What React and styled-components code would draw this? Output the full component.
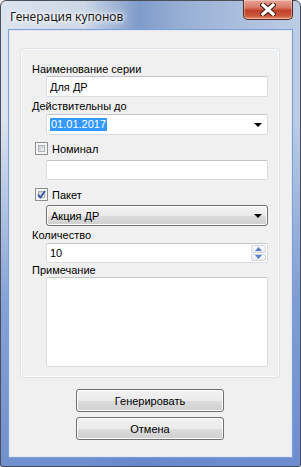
import React from "react";
import styled, { createGlobalStyle } from "styled-components";

const Global = createGlobalStyle`
  html, body { margin: 0; padding: 0; background: #fff; }
  body { width: 301px; height: 467px; overflow: hidden; }
  * { box-sizing: border-box; }
`;

const Window = styled.div`
  width: 301px;
  height: 467px;
  border: 1px solid #4a4f57;
  border-radius: 6px 6px 2px 2px;
  display: flex;
  flex-direction: column;
  padding: 0 8px 9px 8px;
  background:
    linear-gradient(to bottom, rgba(255,255,255,0) 0px, rgba(255,255,255,0) 120px, rgba(106,140,206,0.75) 300px, rgba(100,134,204,0.9) 467px),
    linear-gradient(90deg, #dbe3ee 0%, #ccd7e7 28%, #7f9bca 46%, #98afd5 60%, #bccde5 100%);
  font-family: "Liberation Sans", Arial, sans-serif;
`;

const TitleBar = styled.div`
  height: 29px;
  display: flex;
  align-items: flex-start;
  justify-content: space-between;
  flex-shrink: 0;
`;

const Title = styled.div`
  margin-top: 8px;
  margin-left: 1px;
  font-family: "Noto Sans", "Liberation Sans", sans-serif;
  font-size: 12px;
  line-height: 16px;
  color: #1b1b1b;
  text-shadow: 0 0 6px #fff, 0 0 10px #fff, 0 0 3px #fff;
`;

const CloseButton = styled.div`
  width: 50px;
  height: 20px;
  margin-top: -1px;
  margin-right: -1px;
  border: 1px solid #5a2a22;
  border-top: none;
  border-radius: 0 0 5px 5px;
  background: linear-gradient(to bottom, #e8a595 0%, #d57868 40%, #c2402a 55%, #cc5a3c 85%, #e59a7a 100%);
  box-shadow: inset 0 0 0 1px rgba(255,255,255,0.35);
  display: flex;
  align-items: center;
  justify-content: center;
`;

const Client = styled.div`
  flex: 1;
  background: #f0f0f0;
  border: 1px solid #dfe7f1;
  box-shadow: 0 0 0 1px #7f9fd6;
  display: flex;
  flex-direction: column;
  align-items: center;
  padding: 17px 11px 0 10px;
`;

const Group = styled.div`
  align-self: stretch;
  height: 330px;
  border: 1px solid #dde3ea;
  border-radius: 3px;
  box-shadow: inset 0 0 0 1px #fafafa;
  display: flex;
  flex-direction: column;
  padding: 14px 11px 0 11px;
`;

const Label = styled.div`
  font-size: 11px;
  line-height: 13px;
  height: 13px;
  color: #000;
  margin-top: ${p => p.$mt || 0}px;
  white-space: nowrap;
`;

const Box = styled.div`
  margin-left: 14px;
  margin-top: ${p => p.$mt || 0}px;
  height: ${p => p.$h}px;
  background: #fff;
  border: 1px solid #dadcdf;
  border-top-color: #c2c5ca;
  border-radius: 2px;
  display: flex;
  align-items: center;
  position: relative;
  font-size: 11px;
  color: #000;
  padding-left: 3px;
  flex-shrink: 0;
`;

const Selected = styled.span`
  background: #3399ff;
  color: #fff;
  line-height: 13px;
  padding: 0 1px;
`;

const DropArrow = styled.div`
  position: absolute;
  right: 5px;
  top: 50%;
  margin-top: -2px;
  width: 0;
  height: 0;
  border-left: 4px solid transparent;
  border-right: 4px solid transparent;
  border-top: 4px solid #000;
`;

const Combo = styled.div`
  margin-left: 14px;
  margin-top: ${p => p.$mt || 0}px;
  height: 21px;
  border: 1px solid #707070;
  border-radius: 3px;
  background: linear-gradient(to bottom, #f3f3f3 0%, #ebebeb 50%, #dddddd 51%, #cfcfcf 100%);
  box-shadow: inset 0 0 0 1px #fbfbfb;
  display: flex;
  align-items: center;
  padding-left: 4px;
  font-size: 11px;
  position: relative;
  flex-shrink: 0;
`;

const CheckRow = styled.div`
  display: flex;
  align-items: center;
  gap: 4px;
  margin-left: 3px;
  margin-top: ${p => p.$mt || 0}px;
  height: 13px;
  font-size: 11px;
  flex-shrink: 0;
`;

const CheckBox = styled.div`
  width: 13px;
  height: 13px;
  border: 1px solid #8e8f8f;
  background: #f4f4f4;
  position: relative;
  display: flex;
  align-items: center;
  justify-content: center;
  &::before {
    content: "";
    position: absolute;
    left: 2px; top: 2px; right: 2px; bottom: 2px;
    background: linear-gradient(135deg, #c6cad1 0%, #e2e3e6 60%, #f3f3f3 100%);
    border: 1px solid #aeb2b8;
  }
  svg { position: relative; }
`;

const Spin = styled.div`
  position: absolute;
  right: 1px;
  top: 1px;
  bottom: 1px;
  width: 15px;
  display: flex;
  flex-direction: column;
  gap: 1px;
`;

const SpinBtn = styled.div`
  flex: 1;
  border: 1px solid #d3d6db;
  border-radius: 2px;
  background: linear-gradient(to bottom, #f9f9f9, #eaecef);
  display: flex;
  align-items: center;
  justify-content: center;
`;

const Button = styled.div`
  width: 148px;
  height: 23px;
  margin-top: ${p => p.$mt || 0}px;
  border: 1px solid #707070;
  border-radius: 3px;
  background: linear-gradient(to bottom, #f2f2f2 0%, #ebebeb 50%, #dddddd 51%, #cfcfcf 100%);
  box-shadow: inset 0 0 0 1px #fcfcfc;
  display: flex;
  align-items: center;
  justify-content: center;
  font-size: 11px;
  color: #000;
  flex-shrink: 0;
`;

const Tri = ({ up }) => (
  <svg width="7" height="4" viewBox="0 0 7 4">
    <path d={up ? "M0 4 L3.5 0 L7 4 Z" : "M0 0 L3.5 4 L7 0 Z"} fill="#5b7fc4" />
  </svg>
);

export default function App() {
  return (
    <>
      <Global />
      <Window>
        <TitleBar>
          <Title>Генерация купонов</Title>
          <CloseButton>
            <svg width="16" height="13" viewBox="0 0 16 13">
              <path d="M3 2 L13 11 M13 2 L3 11" stroke="#4a2018" strokeWidth="5.5" strokeLinecap="square" />
              <path d="M3 2 L13 11 M13 2 L3 11" stroke="#fff" strokeWidth="3.2" strokeLinecap="square" />
            </svg>
          </CloseButton>
        </TitleBar>
        <Client>
          <Group>
            <Label>Наименование серии</Label>
            <Box $h={21}>Для ДР</Box>
            <Label $mt={3}>Действительны до</Label>
            <Box $h={21} $mt={1}>
              <Selected>01.01.2017</Selected>
              <DropArrow />
            </Box>
            <CheckRow $mt={7}>
              <CheckBox />
              Номинал
            </CheckRow>
            <Box $h={20} $mt={5} />
            <CheckRow $mt={8}>
              <CheckBox>
                <svg width="9" height="9" viewBox="0 0 9 9">
                  <path d="M1 4.5 L3.5 7.5 L8 1" stroke="#3d54a0" strokeWidth="1.8" fill="none" />
                </svg>
              </CheckBox>
              Пакет
            </CheckRow>
            <Combo $mt={4}>
              Акция ДР
              <DropArrow />
            </Combo>
            <Label $mt={3}>Количество</Label>
            <Box $h={20} $mt={1}>
              10
              <Spin>
                <SpinBtn><Tri up /></SpinBtn>
                <SpinBtn><Tri /></SpinBtn>
              </Spin>
            </Box>
            <Label $mt={1}>Примечание</Label>
            <Box $h={90} />
          </Group>
          <Button $mt={11}>Генерировать</Button>
          <Button $mt={5}>Отмена</Button>
        </Client>
      </Window>
    </>
  );
}
